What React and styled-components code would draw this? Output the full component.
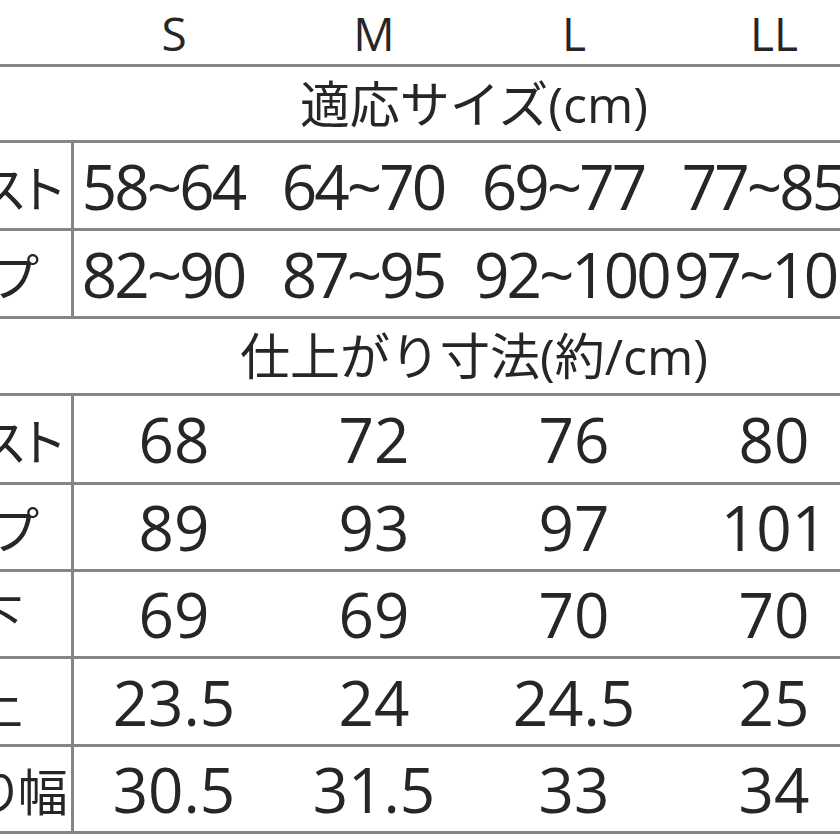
import React from "react";
import styled, { createGlobalStyle } from "styled-components";

const GlobalStyle = createGlobalStyle`
  html, body {
    margin: 0;
    padding: 0;
    background: #ffffff;
  }
  body {
    font-family: "Open Sans", "Noto Sans CJK JP", sans-serif;
    color: #262626;
  }
`;

const Page = styled.div`
  width: 840px;
  height: 840px;
  overflow: hidden;
  background: #fff;
`;

/* the chart is cropped: the label column runs off the left edge */
const Table = styled.div`
  display: flex;
  flex-direction: column;
  width: 999px;
  margin-left: -125px;
`;

const Row = styled.div`
  display: grid;
  grid-template-columns: 199px repeat(4, 200px);
  align-items: center;
  box-sizing: border-box;
  height: ${(p) => p.$h}px;
  border-bottom: 3px solid #858585;
`;

const Label = styled.div`
  box-sizing: border-box;
  height: 100%;
  display: flex;
  align-items: center;
  justify-content: center;
  padding-left: ${(p) => p.$nudge || 0}px;
  border-right: ${(p) => (p.$divider ? "3px solid #858585" : "none")};
  font-family: "Noto Sans CJK JP", sans-serif;
  font-feature-settings: "palt";
  font-size: 50px;
  white-space: nowrap;
`;

const SizeHead = styled.div`
  text-align: center;
  font-size: 46px;
  line-height: 1;
  padding-top: 2px;
`;

const SectionTitle = styled.div`
  grid-column: 2 / span 4;
  text-align: center;
  font-size: 50px;
  line-height: 1;
  white-space: nowrap;
`;

const Value = styled.div`
  box-sizing: border-box;
  text-align: center;
  font-size: 62px;
  line-height: 1;
  white-space: nowrap;
  letter-spacing: ${(p) => (p.$range ? "-3px" : "0")};
  padding-right: ${(p) => (p.$range ? "22px" : "0")};
`;

const sizes = ["S", "M", "L", "LL"];

const fitting = [
  { label: "バスト", nudge: 50, values: ["58~64", "64~70", "69~77", "77~85"], h: 88 },
  { label: "ヒップ", values: ["82~90", "87~95", "92~100", "97~105"], h: 88 },
];

const finished = [
  { label: "バスト", nudge: 50, values: ["68", "72", "76", "80"], h: 89 },
  { label: "ヒップ", values: ["89", "93", "97", "101"], h: 87 },
  { label: "股下", values: ["69", "69", "70", "70"], h: 87 },
  { label: "股上", values: ["23.5", "24", "24.5", "25"], h: 88 },
  { label: "わたり幅", values: ["30.5", "31.5", "33", "34"], h: 87 },
];

function DataRow({ row, range }) {
  return (
    <Row $h={row.h}>
      <Label $divider $nudge={row.nudge}>
        {row.label}
      </Label>
      {row.values.map((v, i) => (
        <Value key={i} $range={range}>
          {v}
        </Value>
      ))}
    </Row>
  );
}

export default function App() {
  return (
    <Page>
      <GlobalStyle />
      <Table>
        <Row $h={67}>
          <Label />
          {sizes.map((s) => (
            <SizeHead key={s}>{s}</SizeHead>
          ))}
        </Row>

        <Row $h={76}>
          <Label />
          <SectionTitle>適応サイズ(cm)</SectionTitle>
        </Row>
        {fitting.map((r) => (
          <DataRow key={r.label} row={r} range />
        ))}

        <Row $h={77}>
          <Label />
          <SectionTitle>仕上がり寸法(約/cm)</SectionTitle>
        </Row>
        {finished.map((r) => (
          <DataRow key={r.label} row={r} />
        ))}
      </Table>
    </Page>
  );
}
